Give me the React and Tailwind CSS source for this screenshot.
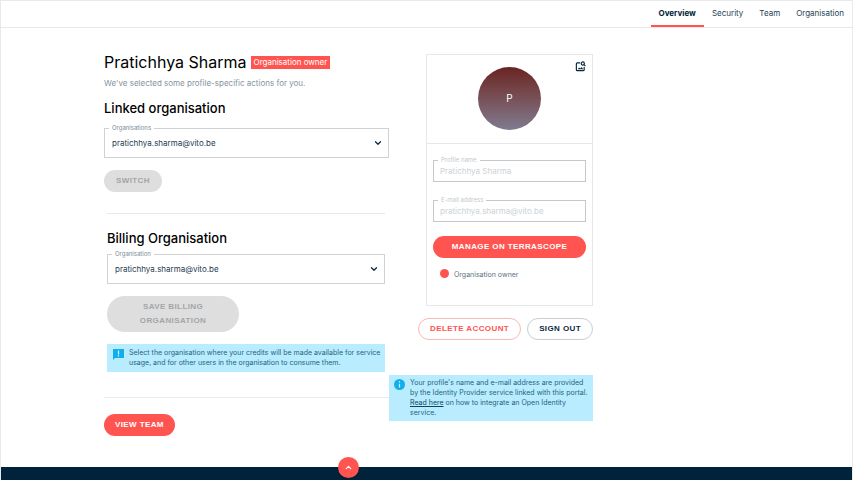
import React from "react";
import { ChevronDown, ChevronUp } from "lucide-react";

function SelectField({ id, label, value }) {
  return (
    <div className="relative h-[30px] border border-[#cfd1d3]">
      <label htmlFor={id} className="absolute -top-[5px] left-1 bg-white px-[3px] text-[6px] leading-[8px] text-[#7b8c98]">
        {label}
      </label>
      <select
        id={id}
        defaultValue={value}
        className="block h-full w-full appearance-none bg-transparent px-[7px] text-[8px] text-[#1f3b50] outline-none"
      >
        <option>{value}</option>
      </select>
      <ChevronDown className="pointer-events-none absolute right-[5px] top-[9px] size-[10px] text-[#0b2a40]" strokeWidth={3} />
    </div>
  );
}

function TextField({ id, label, value, type }) {
  return (
    <div className="relative h-[22px] border border-[#c8c8ca]">
      <label htmlFor={id} className="absolute -top-[5px] left-1 bg-white px-[3px] text-[6px] leading-[8px] text-[#c3c9ce]">
        {label}
      </label>
      <input
        id={id}
        type={type}
        readOnly
        defaultValue={value}
        className="block h-full w-full bg-transparent px-[6px] text-[8px] text-[#ccd2d6] outline-none"
      />
    </div>
  );
}

const pill = "rounded-full font-['Liberation_Sans',Arial,sans-serif] font-bold text-[8px] leading-[14px] tracking-wider uppercase";

function ImageSearchIcon() {
  return (
    <svg viewBox="0 0 24 24" className="size-[11px]" fill="none" stroke="currentColor" strokeWidth="2.6">
      <path d="M11 4H5a2 2 0 0 0-2 2v13a2 2 0 0 0 2 2h13a2 2 0 0 0 2-2v-6" />
      <circle cx="17" cy="5.5" r="3.4" />
      <path d="M19.5 8l3.2 3.2" />
      <path d="M6 18l3-4 2.5 2.5L14.5 13l3.5 5z" fill="currentColor" stroke="none" />
    </svg>
  );
}

export default function App() {
  const tabs = ["Overview", "Security", "Team", "Organisation"];
  return (
    <div className="flex min-h-screen flex-col border-x border-t border-[#e6eaeb] bg-white font-[Inter,sans-serif] text-[#0b2a40]">
      <header className="border-b border-[#e8e8ea]">
        <nav className="flex h-[26px] justify-end">
          {tabs.map((tab, i) => (
            <a
              key={tab}
              href="#"
              aria-current={i === 0 ? "page" : undefined}
              className={
                i === 0
                  ? "border-b-2 border-[#ff5450] px-2 text-[8px] leading-[25px] font-bold text-[#001f35]"
                  : "px-2 text-[8px] leading-[25px] text-[#243f53]"
              }
            >
              {tab}
            </a>
          ))}
        </nav>
      </header>

      <main className="flex w-full max-w-[696px] flex-1 items-start pt-[25px] pr-[104px] pl-[103px]">
        <section className="min-w-0 flex-1">
          <div className="flex h-[18px] items-center gap-1">
            <h1 className="whitespace-nowrap text-[16px] leading-[18px] text-black">Pratichhya Sharma</h1>
            <span className="whitespace-nowrap bg-[#ff5450] px-[3px] text-[8px] leading-[13px] text-white">Organisation owner</span>
          </div>
          <p className="mt-[6px] text-[8px] leading-[12px] text-[#8593a0]">
            We've selected some profile-specific actions for you.
          </p>
          <h2 className="mt-[10px] text-[13px] leading-[18px] font-medium text-black">Linked organisation</h2>
          <div className="mt-[11px]">
            <SelectField id="linked" label="Organisations" value="pratichhya.sharma@vito.be" />
          </div>
          <button disabled className={`${pill} mt-3 block bg-[#dedede] px-3 py-1 text-[#a3a5a8]`}>
            Switch
          </button>
          <div className="mt-[21px] mr-1 ml-[3px] border-t border-[#e6e9eb] pt-[15px]">
            <h2 className="text-[13px] leading-[18px] font-medium text-black">Billing Organisation</h2>
            <div className="mt-[7px]">
              <SelectField id="billing" label="Organisation" value="pratichhya.sharma@vito.be" />
            </div>
            <button disabled className={`${pill} mt-3 block w-[132px] bg-[#dedede] px-6 py-1 text-[#a3a5a8]`}>
              Save billing organisation
            </button>
            <div className="mt-3 flex gap-[5px] bg-[#b9ecff] py-1 pr-1 pl-[6px]">
              <svg viewBox="0 0 11 11" className="mt-px size-[11px] shrink-0">
                <path d="M0 0h11v9H2L0 11z" fill="#10aeea" />
                <path d="M5.5 1.5v4M5.5 6.3v1.2" stroke="#d9f5ff" strokeWidth="1.2" />
              </svg>
              <p className="text-[7px] leading-[10px] text-[#1f6480]">
                Select the organisation where your credits will be made available for service usage, and for other users in the
                organisation to consume them.
              </p>
            </div>
          </div>
          <hr className="mt-[25px] border-[#e9eaee]" />
          <button className={`${pill} mt-4 block bg-[#ff5450] px-[11px] py-1 text-white`}>View team</button>
        </section>

        <aside className="flex w-[204px] shrink-0 flex-col items-end">
          <div className="mt-px h-[252px] w-[167px] border border-[#e3e8e9]">
            <div className="relative flex h-[89px] justify-center border-b border-[#e3e8e9] pt-3">
              <div className="flex size-[63px] items-center justify-center rounded-full bg-linear-to-b from-[#692321] to-[#7f7b90] text-[10px] text-white">
                P
              </div>
              <button aria-label="Change picture" className="absolute top-[6px] right-[6px] text-[#0b2a40]">
                <ImageSearchIcon />
              </button>
            </div>
            <div className="px-[6px] pt-4">
              <TextField id="name" type="text" label="Profile name" value="Pratichhya Sharma" />
              <div className="mt-[18px]">
                <TextField id="email" type="email" label="E-mail address" value="pratichhya.sharma@vito.be" />
              </div>
              <button className={`${pill} mt-[14px] block w-full bg-[#ff5450] py-1 text-white`}>Manage on Terrascope</button>
              <div className="mt-[10px] flex gap-[5px] pl-[7px]">
                <span className="mt-px size-[9px] rounded-full bg-[#ff5450]" />
                <span className="mt-px text-[7px] leading-[12px] text-[#5c7282]">Organisation owner</span>
              </div>
            </div>
          </div>
          <div className="mt-3 flex gap-[6px]">
            <button className={`${pill} whitespace-nowrap border border-[#f5b9b6] px-[11px] py-[3px] text-[#ff5450]`}>
              Delete account
            </button>
            <button className={`${pill} whitespace-nowrap border border-[#c9ced4] px-[11px] py-[3px] text-[#0b2a40]`}>
              Sign out
            </button>
          </div>
          <div className="mt-[35px] flex w-full gap-[5px] bg-[#b9ecff] py-[3px] pr-[2px] pl-[5px]">
            <svg viewBox="0 0 11 11" className="mt-px size-[11px] shrink-0">
              <circle cx="5.5" cy="5.5" r="5.5" fill="#10aeea" />
              <path d="M5.5 2.3v1.3M5.5 4.8v3.8" stroke="#d9f5ff" strokeWidth="1.2" />
            </svg>
            <p className="text-[7px] leading-[10px] text-[#1f6480]">
              Your profile's name and e-mail address are provided by the Identity Provider service linked with this portal.{" "}
              <a href="#" className="text-[#0b4660] underline">
                Read here
              </a>{" "}
              on how to integrate an Open Identity service.
            </p>
          </div>
        </aside>
      </main>

      <footer className="relative h-[13px] bg-[#00233b]">
        <button
          aria-label="Back to top"
          className="absolute -top-[10px] left-[337px] flex size-[21px] items-center justify-center rounded-full bg-[#ff5450] text-white shadow-sm"
        >
          <ChevronUp className="size-[9px]" strokeWidth={3} />
        </button>
      </footer>
    </div>
  );
}
